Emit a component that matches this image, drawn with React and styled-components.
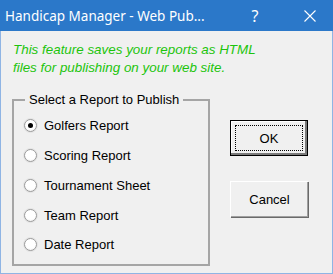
import styled, { createGlobalStyle } from "styled-components";

const GlobalStyle = createGlobalStyle`
  html, body {
    margin: 0;
    padding: 0;
    background: #f0f0f0;
  }
`;

const Window = styled.div`
  width: 333px;
  height: 274px;
  box-sizing: border-box;
  border: 1px solid #8fb4e4;
  border-top: none;
  background: #f0f0f0;
  display: flex;
  flex-direction: column;
  font-family: "Liberation Sans", Arial, sans-serif;
`;

const TitleBar = styled.div`
  height: 31px;
  background: #2b78c9;
  color: #ffffff;
  display: flex;
  align-items: center;
  padding-left: 5px;
  margin: 0 -1px;
  flex-shrink: 0;
`;

const Title = styled.div`
  flex: 1;
  font-family: "Noto Sans", "Open Sans", sans-serif;
  font-size: 13.5px;
  white-space: nowrap;
`;

const TitleButton = styled.div`
  width: ${(p) => p.w}px;
  height: 31px;
  display: flex;
  align-items: center;
  justify-content: center;
  font-family: "Noto Sans", sans-serif;
  font-size: 16px;
`;

const Body = styled.div`
  flex: 1;
  display: flex;
  flex-direction: column;
  padding: 10px 0 0 12px;
`;

const Intro = styled.p`
  margin: 0;
  color: #1cc40c;
  font-style: italic;
  font-size: 13.4px;
  line-height: 18px;
`;

const Row = styled.div`
  display: flex;
  margin-top: 15px;
`;

const Group = styled.fieldset`
  margin: 0 0 0 -1px;
  width: 198px;
  height: 174px;
  box-sizing: border-box;
  border: 2px solid #a5a5a5;
  padding: 4px 0 0 10px;
  display: flex;
  flex-direction: column;
`;

const Legend = styled.legend`
  font-size: 13px;
  color: #000;
  padding: 0 4px;
  margin-left: 1px;
`;

const Option = styled.label`
  display: flex;
  align-items: center;
  flex-shrink: 0;
  height: 29.75px;
  font-size: 13px;
  color: #000;
  gap: 7px;
`;

const Dot = styled.span`
  width: 11px;
  height: 11px;
  border-radius: 50%;
  border: 1px solid #9a9a9a;
  background: radial-gradient(circle at 50% 40%, #ffffff 55%, #e6e6e6 100%);
  display: flex;
  align-items: center;
  justify-content: center;
  box-shadow: 0 0 0 1px #e4e4e4;

  &::after {
    content: "";
    width: 5px;
    height: 5px;
    border-radius: 50%;
    background: ${(p) => (p.checked ? "#000" : "transparent")};
  }
`;

const Buttons = styled.div`
  display: flex;
  flex-direction: column;
  margin-left: 20px;
  margin-top: 28px;
  gap: 25px;
`;

const Button = styled.button`
  width: 78px;
  height: 36px;
  box-sizing: border-box;
  font-family: "Liberation Sans", Arial, sans-serif;
  font-size: 13px;
  color: #000;
  background: #f0f0f0;
  padding: 0;
  border: ${(p) => (p.primary ? "1px solid #000" : "none")};
  border-top: ${(p) => (p.primary ? "1px solid #000" : "1px solid #ffffff")};
  border-left: ${(p) => (p.primary ? "1px solid #000" : "1px solid #ffffff")};
  box-shadow: ${(p) =>
    p.primary
      ? "inset -2px -2px 0 #7a7a7a, inset 1px 1px 0 #ffffff"
      : "inset -1px -1px 0 #a0a0a0, 1px 1px 0 #6a6a6a"};
  display: flex;
  align-items: center;
  justify-content: center;
`;

const Focus = styled.span`
  display: flex;
  align-items: center;
  justify-content: center;
  width: 68px;
  height: 26px;
  box-sizing: border-box;
  border: 1px dotted #000;
`;

const options = [
  "Golfers Report",
  "Scoring Report",
  "Tournament Sheet",
  "Team Report",
  "Date Report",
];

export default function App() {
  return (
    <>
      <GlobalStyle />
      <Window>
        <TitleBar>
          <Title>Handicap Manager - Web Pub...</Title>
          <TitleButton w={24}>?</TitleButton>
          <TitleButton w={20} />
          <TitleButton w={46}>
            <svg width="12" height="12" viewBox="0 0 12 12">
              <path d="M0.5 0.5 L11.5 11.5 M11.5 0.5 L0.5 11.5" stroke="#fff" strokeWidth="1.1" />
            </svg>
          </TitleButton>
        </TitleBar>
        <Body>
          <Intro>
            This feature saves your reports as HTML
            <br />
            files for publishing on your web site.
          </Intro>
          <Row>
            <Group>
              <Legend>Select a Report to Publish</Legend>
              {options.map((o, i) => (
                <Option key={o}>
                  <Dot checked={i === 0} />
                  {o}
                </Option>
              ))}
            </Group>
            <Buttons>
              <Button primary>
                <Focus>OK</Focus>
              </Button>
              <Button>Cancel</Button>
            </Buttons>
          </Row>
        </Body>
      </Window>
    </>
  );
}
